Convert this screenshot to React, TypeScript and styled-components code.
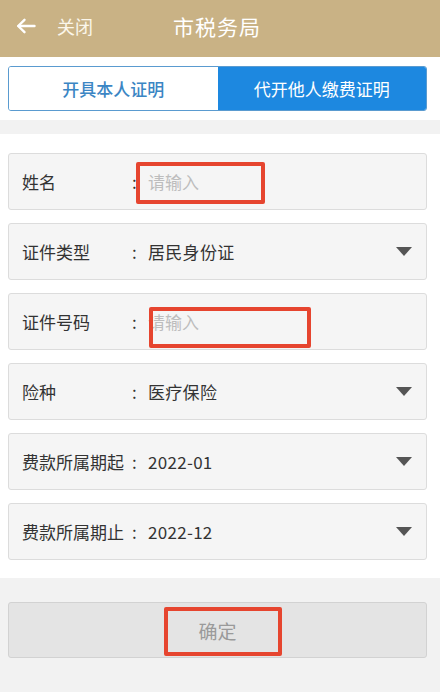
import styled, { createGlobalStyle } from 'styled-components';

const GlobalStyle = createGlobalStyle`
    html, body {
        margin: 0;
        padding: 0;
        background: #f2f2f2;
        font-family: "Noto Sans CJK SC", "Noto Sans", "Liberation Sans", sans-serif;
        color: #333;
    }
`;

type Mark = { left: number; top: number; w: number; h: number };

type Field = {
    label: string;
    value?: string;
    placeholder?: string;
    select?: boolean;
    mark?: Mark;
};

const fields: Field[] = [
    { label: '姓名', placeholder: '请输入', mark: { left: 127, top: 8, w: 129, h: 42 } },
    { label: '证件类型', value: '居民身份证', select: true },
    { label: '证件号码', placeholder: '请输入', mark: { left: 140, top: 13, w: 162, h: 41 } },
    { label: '险种', value: '医疗保险', select: true },
    { label: '费款所属期起', value: '2022-01', select: true },
    { label: '费款所属期止', value: '2022-12', select: true },
];

const BackArrow = () => (
    <svg width="20" height="16" viewBox="0 0 20 16" fill="none" stroke="#fff" strokeWidth="2.4" strokeLinecap="round" strokeLinejoin="round">
        <path d="M18.5 8H2.5" />
        <path d="M8.5 1.8L2.2 8l6.3 6.2" />
    </svg>
);

const Caret = () => (
    <svg width="16" height="9" viewBox="0 0 16 9">
        <path d="M0 0h16L8 9z" fill="#555" />
    </svg>
);

const App = () => (
    <>
        <GlobalStyle />
        <Page>
            <Header>
                <Back>
                    <BackArrow />
                    <span>关闭</span>
                </Back>
                <Title>市税务局</Title>
                <span />
            </Header>

            <TabBar>
                <Tabs>
                    <Tab>开具本人证明</Tab>
                    <Tab $active>代开他人缴费证明</Tab>
                </Tabs>
            </TabBar>

            <Divider />

            <Form>
                {fields.map((f) => (
                    <Row key={f.label}>
                        <Label>{f.label}</Label>
                        <Colon>:</Colon>
                        {f.placeholder ? <Placeholder>{f.placeholder}</Placeholder> : <Value>{f.value}</Value>}
                        {f.select && (
                            <CaretBox>
                                <Caret />
                            </CaretBox>
                        )}
                        {f.mark && <RedMark $left={f.mark.left} $top={f.mark.top} $w={f.mark.w} $h={f.mark.h} />}
                    </Row>
                ))}
            </Form>

            <Footer>
                <Submit>
                    确定
                    <RedMark $left={155} $top={4} $w={118} $h={49} />
                </Submit>
            </Footer>
        </Page>
    </>
);

export default App;

/*
 * Styled declarations
 */
const Page = styled.div`
    display: flex;
    flex-direction: column;
    min-height: 692px;
    background: #f2f2f2;
`;

const Header = styled.header`
    display: grid;
    grid-template-columns: 1fr auto 1fr;
    align-items: center;
    height: 51px;
    padding: 0 16px 6px 16px;
    background: #c9b285;
    color: #fff;
`;

const Back = styled.div`
    display: flex;
    align-items: center;
    gap: 21px;
    font-size: 18px;
    color: #fbf6ea;

    & svg {
        display: block;
    }
`;

const Title = styled.h1`
    margin: 0 0 0 -6px;
    font-size: 21px;
    font-weight: 400;
    letter-spacing: 1px;
`;

const TabBar = styled.div`
    padding: 9px 13px 9px 8px;
    background: #fff;
`;

const Tabs = styled.div`
    display: grid;
    grid-template-columns: 1fr 1fr;
    height: 45px;
    border: 1px solid #5a9bd0;
    border-radius: 3px;
    overflow: hidden;
    box-sizing: border-box;
`;

const Tab = styled.div<{ $active?: boolean }>`
    display: flex;
    align-items: center;
    justify-content: center;
    font-size: 17px;
    font-weight: ${({ $active }) => ($active ? 400 : 500)};
    background: ${({ $active }) => ($active ? '#1d88e0' : '#fff')};
    color: ${({ $active }) => ($active ? '#fff' : '#3b86c4')};
`;

const Divider = styled.div`
    height: 14px;
    background: #f2f2f2;
`;

const Form = styled.div`
    display: flex;
    flex-direction: column;
    gap: 13px;
    padding: 19px 13px 18px 8px;
    background: #fff;
`;

const Row = styled.div`
    position: relative;
    display: flex;
    align-items: center;
    height: 57px;
    padding: 0 14px 0 13px;
    box-sizing: border-box;
    background: #f5f5f5;
    border: 1px solid #dcdcdc;
    border-radius: 3px;
    font-size: 17px;
`;

const Label = styled.span`
    flex: 0 0 104px;
    color: #333;
    white-space: nowrap;
`;

const Colon = styled.span`
    flex: 0 0 22px;
    padding-left: 6px;
    box-sizing: border-box;
    color: #333;
`;

const Value = styled.span`
    flex: 1;
    color: #333;
    letter-spacing: 0.3px;
`;

const Placeholder = styled.span`
    flex: 1;
    color: #bdbdbd;
`;

const CaretBox = styled.span`
    display: flex;
    margin-left: auto;
`;

const RedMark = styled.span<{ $left: number; $top: number; $w: number; $h: number }>`
    position: absolute;
    left: ${({ $left }) => $left}px;
    top: ${({ $top }) => $top}px;
    width: ${({ $w }) => $w}px;
    height: ${({ $h }) => $h}px;
    border: 4px solid #e6452f;
    border-radius: 2px;
    box-sizing: border-box;
    pointer-events: none;
`;

const Footer = styled.div`
    flex: 1;
    padding: 24px 13px 24px 8px;
    background: #f2f2f2;
`;

const Submit = styled.div`
    position: relative;
    display: flex;
    align-items: center;
    justify-content: center;
    height: 56px;
    box-sizing: border-box;
    background: #e4e4e4;
    border: 1px solid #d2d2d2;
    border-radius: 3px;
    font-size: 19px;
    color: #9a9a9a;
`;
